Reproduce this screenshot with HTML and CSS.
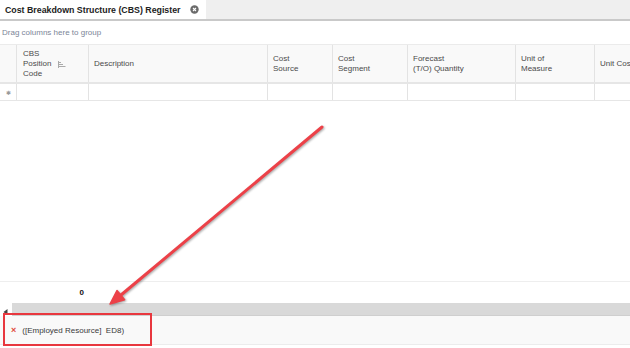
FILE: index.html
```html
<!DOCTYPE html>
<html>
<head>
<meta charset="utf-8">
<link rel="stylesheet" href="styles.css">
</head>
<body>
<div class="page">
  <div class="tabbar">
    <div class="tab">
      <span class="tab-title">Cost Breakdown Structure (CBS) Register</span>
      <svg class="tab-close" width="9" height="9" viewBox="0 0 9 9"><circle cx="4.5" cy="4.5" r="4.2" fill="#6b6b6b"/><path d="M3 3 L6 6 M6 3 L3 6" stroke="#fff" stroke-width="1.1"/></svg>
    </div>
  </div>
  <div class="group-bar">Drag columns here to group</div>
  <div class="grid-row head">
    <div class="cell"></div>
    <div class="cell cbs"><span>CBS<br>Position<br>Code</span>
      <svg class="sort" width="8" height="7" viewBox="0 0 8 7"><path d="M0.5 0 V7" stroke="#aaa" stroke-width="1"/><path d="M1 1.5 H3 M1 3.5 H5 M1 5.5 H7.5" stroke="#aaa" stroke-width="1"/></svg>
    </div>
    <div class="cell">Description</div>
    <div class="cell">Cost<br>Source</div>
    <div class="cell">Cost<br>Segment</div>
    <div class="cell">Forecast<br>(T/O) Quantity</div>
    <div class="cell">Unit of<br>Measure</div>
    <div class="cell">Unit Cost</div>
  </div>
  <div class="grid-row data">
    <div class="cell star">✱</div>
    <div class="cell"></div>
    <div class="cell"></div>
    <div class="cell"></div>
    <div class="cell"></div>
    <div class="cell"></div>
    <div class="cell"></div>
    <div class="cell"></div>
  </div>
  <div class="grid-empty"></div>
  <div class="grid-row foot">
    <div class="cell"></div>
    <div class="cell total">0</div>
  </div>
  <div class="hscroll">
    <div class="hscroll-btn"><svg width="5" height="6" viewBox="0 0 5 6"><path d="M4.5 0 L0.5 3 L4.5 6 Z" fill="#444"/></svg></div>
    <div class="hscroll-track"></div>
  </div>
  <div class="status">
    <span class="err-x">×</span>
    <span class="err-text">([Employed Resource]&nbsp; ED8)</span>
  </div>

  <div class="highlight-box"></div>
  <svg class="annot-arrow" width="630" height="348" viewBox="0 0 630 348">
    <line x1="322" y1="127" x2="121" y2="295" stroke="#ec4148" stroke-width="3" stroke-linecap="round"/>
    <polygon points="110,304 124.6,299.7 117,290.5" fill="#ec4148" stroke="#ec4148" stroke-width="1.5" stroke-linejoin="round"/>
  </svg>
</div>
</body>
</html>
```
FILE: styles.css
```css
html, body {
  margin: 0;
  padding: 0;
  background: #fff;
}
.page {
  position: relative;
  width: 630px;
  height: 348px;
  padding-bottom: 3px;
  box-sizing: border-box;
  overflow: hidden;
  display: flex;
  flex-direction: column;
  font-family: "Liberation Sans", Arial, sans-serif;
  font-size: 8px;
  color: #444;
}
.tabbar {
  height: 19px;
  background: #efefef;
  border-bottom: 2px solid #c9c9c9;
  display: flex;
  flex-shrink: 0;
}
.tab {
  width: 206px;
  background: #fff;
  display: flex;
  align-items: center;
  padding-left: 5px;
  box-sizing: border-box;
}
.tab-title {
  font-weight: bold;
  color: #222;
  font-size: 8.8px;
}
.tab-close {
  margin-left: 10px;
}
.group-bar {
  height: 23px;
  line-height: 24px;
  padding-left: 2px;
  color: #7b8597;
  flex-shrink: 0;
}
.grid-row {
  display: grid;
  grid-template-columns: 17px 72px 179px 65px 75px 108px 79px 120px;
  flex-shrink: 0;
}
.cell {
  border-right: 1px solid #e3e3e3;
  box-sizing: border-box;
  padding: 0 5px;
  display: flex;
  align-items: center;
  overflow: hidden;
  white-space: nowrap;
}
.head {
  height: 40px;
  box-sizing: border-box;
  background: #f9f9f9;
  border-top: 1px solid #ebebeb;
  border-bottom: 2px solid #e6e6e6;
  line-height: 10px;
  color: #4a4a4a;
}
.head .cell:first-child {
  padding: 0;
}
.cbs {
  padding-left: 6px;
}
.cbs span {
  width: 30px;
}
.sort {
  margin-left: 5px;
  margin-top: 1px;
}
.data {
  height: 17px;
  box-sizing: border-box;
  border-bottom: 1px solid #e6e6e6;
}
.star {
  color: #999;
  font-size: 6px;
  padding: 0 0 0 6px;
}
.grid-empty {
  flex: 1;
  border-bottom: 1px solid #eeeeee;
}
.foot {
  height: 21px;
}
.foot .cell {
  border-right: none;
}
.total {
  justify-content: flex-end;
  font-weight: bold;
  color: #111;
  padding-right: 5px;
}
.hscroll {
  height: 13px;
  display: flex;
  flex-shrink: 0;
}
.hscroll-btn {
  width: 12px;
  display: flex;
  align-items: center;
  padding-left: 3px;
  padding-top: 4px;
  box-sizing: border-box;
}
.hscroll-track {
  flex: 1;
  background: #d9d9d9;
  border-bottom: 1px solid #cfcfcf;
}
.status {
  height: 29px;
  box-sizing: border-box;
  background: #f9f9f9;
  border-bottom: 1px solid #ececec;
  display: flex;
  align-items: center;
  padding-left: 11px;
  flex-shrink: 0;
}
.err-x {
  color: #e04a3a;
  font-weight: bold;
  font-size: 9px;
  margin-right: 6px;
}
.err-text {
  color: #3a3a3a;
}
.highlight-box {
  position: absolute;
  left: 3px;
  top: 313px;
  width: 149px;
  height: 33px;
  border: 2px solid #e8373e;
  box-sizing: border-box;
}
.annot-arrow {
  position: absolute;
  left: 0;
  top: 0;
  pointer-events: none;
  filter: drop-shadow(1px 1px 1px rgba(0,0,0,0.35));
}
```
